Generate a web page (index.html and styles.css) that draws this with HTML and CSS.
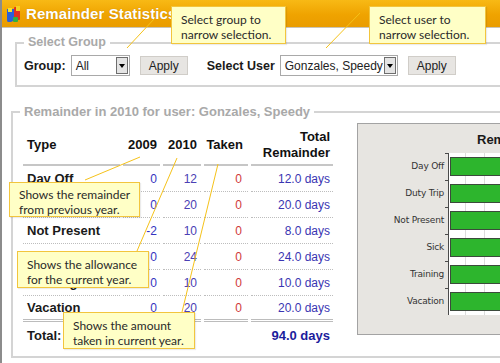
FILE: index.html
```html
<!DOCTYPE html>
<html lang="en">

<head>
    <meta charset="UTF-8">
    <title>Remainder Statistics</title>
    <link rel="stylesheet" href="styles.css">
</head>

<body>
    <div class="window">
        <header class="titlebar">
            <svg class="app-icon" width="17" height="18" viewBox="0 0 17 18">
                <rect x="9" y="2" width="6" height="13" rx="1" fill="#e03020" />
                <rect x="11" y="1" width="4" height="5" fill="#f7d020" />
                <path d="M2 4 h7 v10 a4 4 0 0 1 -4 3 h-2 a2 2 0 0 1 -1 -2 z" fill="#2a5fd8" />
                <rect x="3" y="3" width="4" height="4" fill="#f2e030" />
                <rect x="8" y="12" width="5" height="5" rx="1" fill="#32b040" />
            </svg>
            <h1>Remainder Statistics</h1>
        </header>

        <div class="content">
            <fieldset class="panel select-panel">
                <legend>Select Group</legend>
                <div class="filters">
                    <span class="filter-label">Group:</span>
                    <div class="select select-group"><span>All</span><i class="arrow"></i></div>
                    <button class="btn">Apply</button>
                    <span class="filter-label user-label">Select User</span>
                    <div class="select select-user"><span>Gonzales, Speedy</span><i class="arrow"></i></div>
                    <button class="btn">Apply</button>
                </div>
            </fieldset>

            <fieldset class="panel remainder-panel">
                <legend>Remainder in 2010 for user: Gonzales, Speedy</legend>
                <div class="remainder-body">
                    <table class="stats">
                        <thead>
                            <tr>
                                <th class="col-type">Type</th>
                                <th class="col-prev">2009</th>
                                <th class="col-cur">2010</th>
                                <th class="col-taken">Taken</th>
                                <th class="col-rem">Total<br>Remainder</th>
                            </tr>
                        </thead>
                        <tbody>
                            <tr>
                                <td class="col-type">Day Off</td>
                                <td class="col-prev">0</td>
                                <td class="col-cur">12</td>
                                <td class="col-taken">0</td>
                                <td class="col-rem">12.0 days</td>
                            </tr>
                            <tr>
                                <td class="col-type">Duty Trip</td>
                                <td class="col-prev">0</td>
                                <td class="col-cur">20</td>
                                <td class="col-taken">0</td>
                                <td class="col-rem">20.0 days</td>
                            </tr>
                            <tr>
                                <td class="col-type">Not Present</td>
                                <td class="col-prev">-2</td>
                                <td class="col-cur">10</td>
                                <td class="col-taken">0</td>
                                <td class="col-rem">8.0 days</td>
                            </tr>
                            <tr>
                                <td class="col-type">Sick</td>
                                <td class="col-prev">0</td>
                                <td class="col-cur">24</td>
                                <td class="col-taken">0</td>
                                <td class="col-rem">24.0 days</td>
                            </tr>
                            <tr>
                                <td class="col-type">Training</td>
                                <td class="col-prev">0</td>
                                <td class="col-cur">10</td>
                                <td class="col-taken">0</td>
                                <td class="col-rem">10.0 days</td>
                            </tr>
                            <tr class="last-row">
                                <td class="col-type">Vacation</td>
                                <td class="col-prev">0</td>
                                <td class="col-cur">20</td>
                                <td class="col-taken">0</td>
                                <td class="col-rem">20.0 days</td>
                            </tr>
                        </tbody>
                        <tfoot>
                            <tr>
                                <td class="col-type">Total:</td>
                                <td></td>
                                <td></td>
                                <td></td>
                                <td class="col-rem sum">94.0 days</td>
                            </tr>
                        </tfoot>
                    </table>

                    <div class="chart">
                        <div class="chart-title">Remainder</div>
                        <div class="chart-body">
                            <div class="chart-labels">
                                <span>Day Off</span>
                                <span>Duty Trip</span>
                                <span>Not Present</span>
                                <span>Sick</span>
                                <span>Training</span>
                                <span>Vacation</span>
                            </div>
                            <div class="chart-plot">
                                <div class="band"><div class="bar"></div></div>
                                <div class="band"><div class="bar"></div></div>
                                <div class="band"><div class="bar"></div></div>
                                <div class="band"><div class="bar"></div></div>
                                <div class="band"><div class="bar"></div></div>
                                <div class="band"><div class="bar"></div></div>
                            </div>
                        </div>
                    </div>
                </div>
            </fieldset>
        </div>

        <!-- help callouts -->
        <svg class="callout-lines" width="500" height="363">
            <line x1="155" y1="18" x2="127" y2="48" />
            <line x1="360" y1="13" x2="326" y2="48" />
            <line x1="85" y1="180" x2="140" y2="157" />
            <line x1="137" y1="251" x2="177" y2="158" />
            <line x1="182" y1="312" x2="218" y2="164" />
        </svg>
        <div class="tip tip-group">Select group to<br>narrow selection.</div>
        <div class="tip tip-user">Select user to<br>narrow selection.</div>
        <div class="tip tip-prev">Shows the remainder<br>from previous year.</div>
        <div class="tip tip-cur">Shows the allowance<br>for the current year.</div>
        <div class="tip tip-taken">Shows the amount<br>taken in current year.</div>
    </div>
</body>

</html>
```

FILE: styles.css
```css
* {
    margin: 0;
    padding: 0;
    box-sizing: border-box;
}

body {
    font-family: "Liberation Sans", Arial, sans-serif;
    background: #fff;
    overflow: hidden;
    width: 500px;
    height: 363px;
}

.window {
    position: relative;
    width: 640px;
    height: 363px;
    border-left: 2px solid #8c8c8c;
    background: #fff;
}

/* title bar */
.titlebar {
    display: flex;
    align-items: center;
    height: 28px;
    padding-left: 3px;
    background: linear-gradient(#f8b915, #efa300 55%, #e99c00);
    border-bottom: 1px solid #c9c4b8;
}

.app-icon {
    margin-right: 4px;
}

.titlebar h1 {
    font-size: 15px;
    font-weight: bold;
    color: #fff;
    text-shadow: 0 0 1px #b87a00;
    letter-spacing: 0.1px;
}

/* fieldsets */
.panel {
    border: 2px solid #d4d4d4;
}

.panel legend {
    font-size: 13px;
    font-weight: bold;
    color: #a9a9a9;
    padding: 0 4px;
    line-height: 15px;
}

.select-panel {
    margin: 7px 0 0 13px;
    padding: 5px 7px 9px;
}

.select-panel legend {
    font-size: 12.5px;
}

.remainder-panel {
    margin: 17px 0 0 9px;
    padding: 4px 7px 7px;
}

/* filter row */
.filters {
    display: flex;
    align-items: center;
    height: 21px;
    font-size: 12px;
}

.filter-label {
    font-weight: bold;
    font-size: 12.5px;
    color: #1a1a1a;
}

.user-label {
    margin-left: 19px;
}

.select {
    display: flex;
    align-items: center;
    justify-content: space-between;
    height: 21px;
    margin-left: 5px;
    padding: 1px 1px 1px 4px;
    border: 1px solid #a9a9a9;
    background: #fff;
    color: #222;
}

.select-group {
    width: 59px;
}

.select-user {
    width: 118px;
}

.arrow {
    position: relative;
    width: 12px;
    height: 17px;
    background: #e4e4e4;
    border: 1px solid #6e6e6e;
}

.arrow::after {
    content: "";
    position: absolute;
    left: 2px;
    top: 6px;
    border-left: 3px solid transparent;
    border-right: 3px solid transparent;
    border-top: 4px solid #000;
}

.btn {
    width: 48px;
    height: 19px;
    margin-left: 10px;
    font-family: inherit;
    font-size: 12px;
    color: #222;
    background: #e7e5e2;
    border: 1px solid #d0cdc8;
}

/* remainder table */
.remainder-body {
    display: flex;
    align-items: flex-start;
    gap: 21px;
}

.stats {
    margin-top: 3px;
    border-collapse: separate;
    border-spacing: 3px 0;
    font-size: 12px;
}

.stats th {
    height: 40px;
    font-size: 13px;
    line-height: 16px;
    color: #111;
    border-bottom: 2px solid #c6c6c6;
    text-align: right;
    padding-right: 3px;
}

.stats td {
    height: 26px;
    text-align: right;
    padding-right: 3px;
    border-bottom: 1px dotted #bdbdbd;
}

.stats .col-type {
    width: 97px;
    text-align: left;
    padding-left: 4px;
    font-size: 13px;
    font-weight: bold;
    color: #1a1a1a;
}

.stats .col-prev {
    width: 37px;
    color: #3434c0;
}

.stats .col-cur {
    width: 38px;
    color: #4a40b4;
    padding-right: 4px;
}

.stats .col-taken {
    width: 44px;
    color: #d03a3a;
    padding-right: 6px;
}

.stats .col-rem {
    width: 82px;
    color: #3a35b2;
}

.stats th.col-taken {
    padding-right: 5px;
}

.stats th[class] {
    color: #111;
}

.stats .last-row td {
    border-bottom: 3px double #bcbcbc;
}

.stats tfoot td {
    border-bottom: none;
    height: 27px;
}

.stats .sum {
    font-size: 13px;
    font-weight: bold;
    color: #1c1c9c;
}

/* chart */
.chart {
    width: 230px;
    height: 212px;
    background: #e7e5e1;
    border: 1px solid #a3a3a3;
}

.chart-title {
    height: 29px;
    padding: 8px 0 0 119px;
    font-size: 13px;
    font-weight: bold;
    color: #1a1a1a;
}

.chart-body {
    display: flex;
}

.chart-labels {
    display: flex;
    flex-direction: column;
    width: 86px;
    margin-right: 4px;
    font-family: "DejaVu Sans", sans-serif;
    font-size: 9px;
    color: #333;
    text-align: right;
}

.chart-labels span {
    height: 27px;
    line-height: 27px;
    letter-spacing: -0.2px;
}

.chart-plot {
    flex: 1;
    border-left: 1px solid #4a4a4a;
    background: #fff repeating-linear-gradient(to right, transparent 0 16px, #dcdcdc 16px 17px, transparent 17px 19px);
}

.band {
    position: relative;
    height: 27px;
    padding-top: 4px;
}

.band::before {
    content: "";
    position: absolute;
    left: -4px;
    top: 0;
    width: 3px;
    height: 1px;
    background: #4a4a4a;
}

.bar {
    height: 19px;
    margin-left: 1px;
    background: #2db52d;
    border: 1px solid #3c4a3c;
}

/* help callouts */
.callout-lines {
    position: absolute;
    left: -2px;
    top: 0;
    pointer-events: none;
}

.callout-lines line {
    stroke: #f5c21a;
    stroke-width: 1;
}

.tip {
    position: absolute;
    padding: 5px 9px;
    font-family: Lato, "Liberation Sans", sans-serif;
    font-size: 12px;
    line-height: 15px;
    white-space: nowrap;
    color: #2a2a2a;
    background: #ffffc6;
    border: 1px solid #f2c53d;
    box-shadow: 1px 1px 1px rgba(0, 0, 0, 0.08);
}

.tip-group {
    left: 169px;
    top: 6px;
    width: 115px;
    height: 38px;
}

.tip-user {
    left: 367px;
    top: 6px;
    width: 117px;
    height: 38px;
}

.tip-prev {
    left: 7px;
    top: 182px;
    width: 131px;
    height: 35px;
    padding-top: 4px;
}

.tip-cur {
    left: 15px;
    top: 251px;
    width: 132px;
    height: 37px;
}

.tip-taken {
    left: 61px;
    top: 312px;
    width: 132px;
    height: 37px;
}
```
